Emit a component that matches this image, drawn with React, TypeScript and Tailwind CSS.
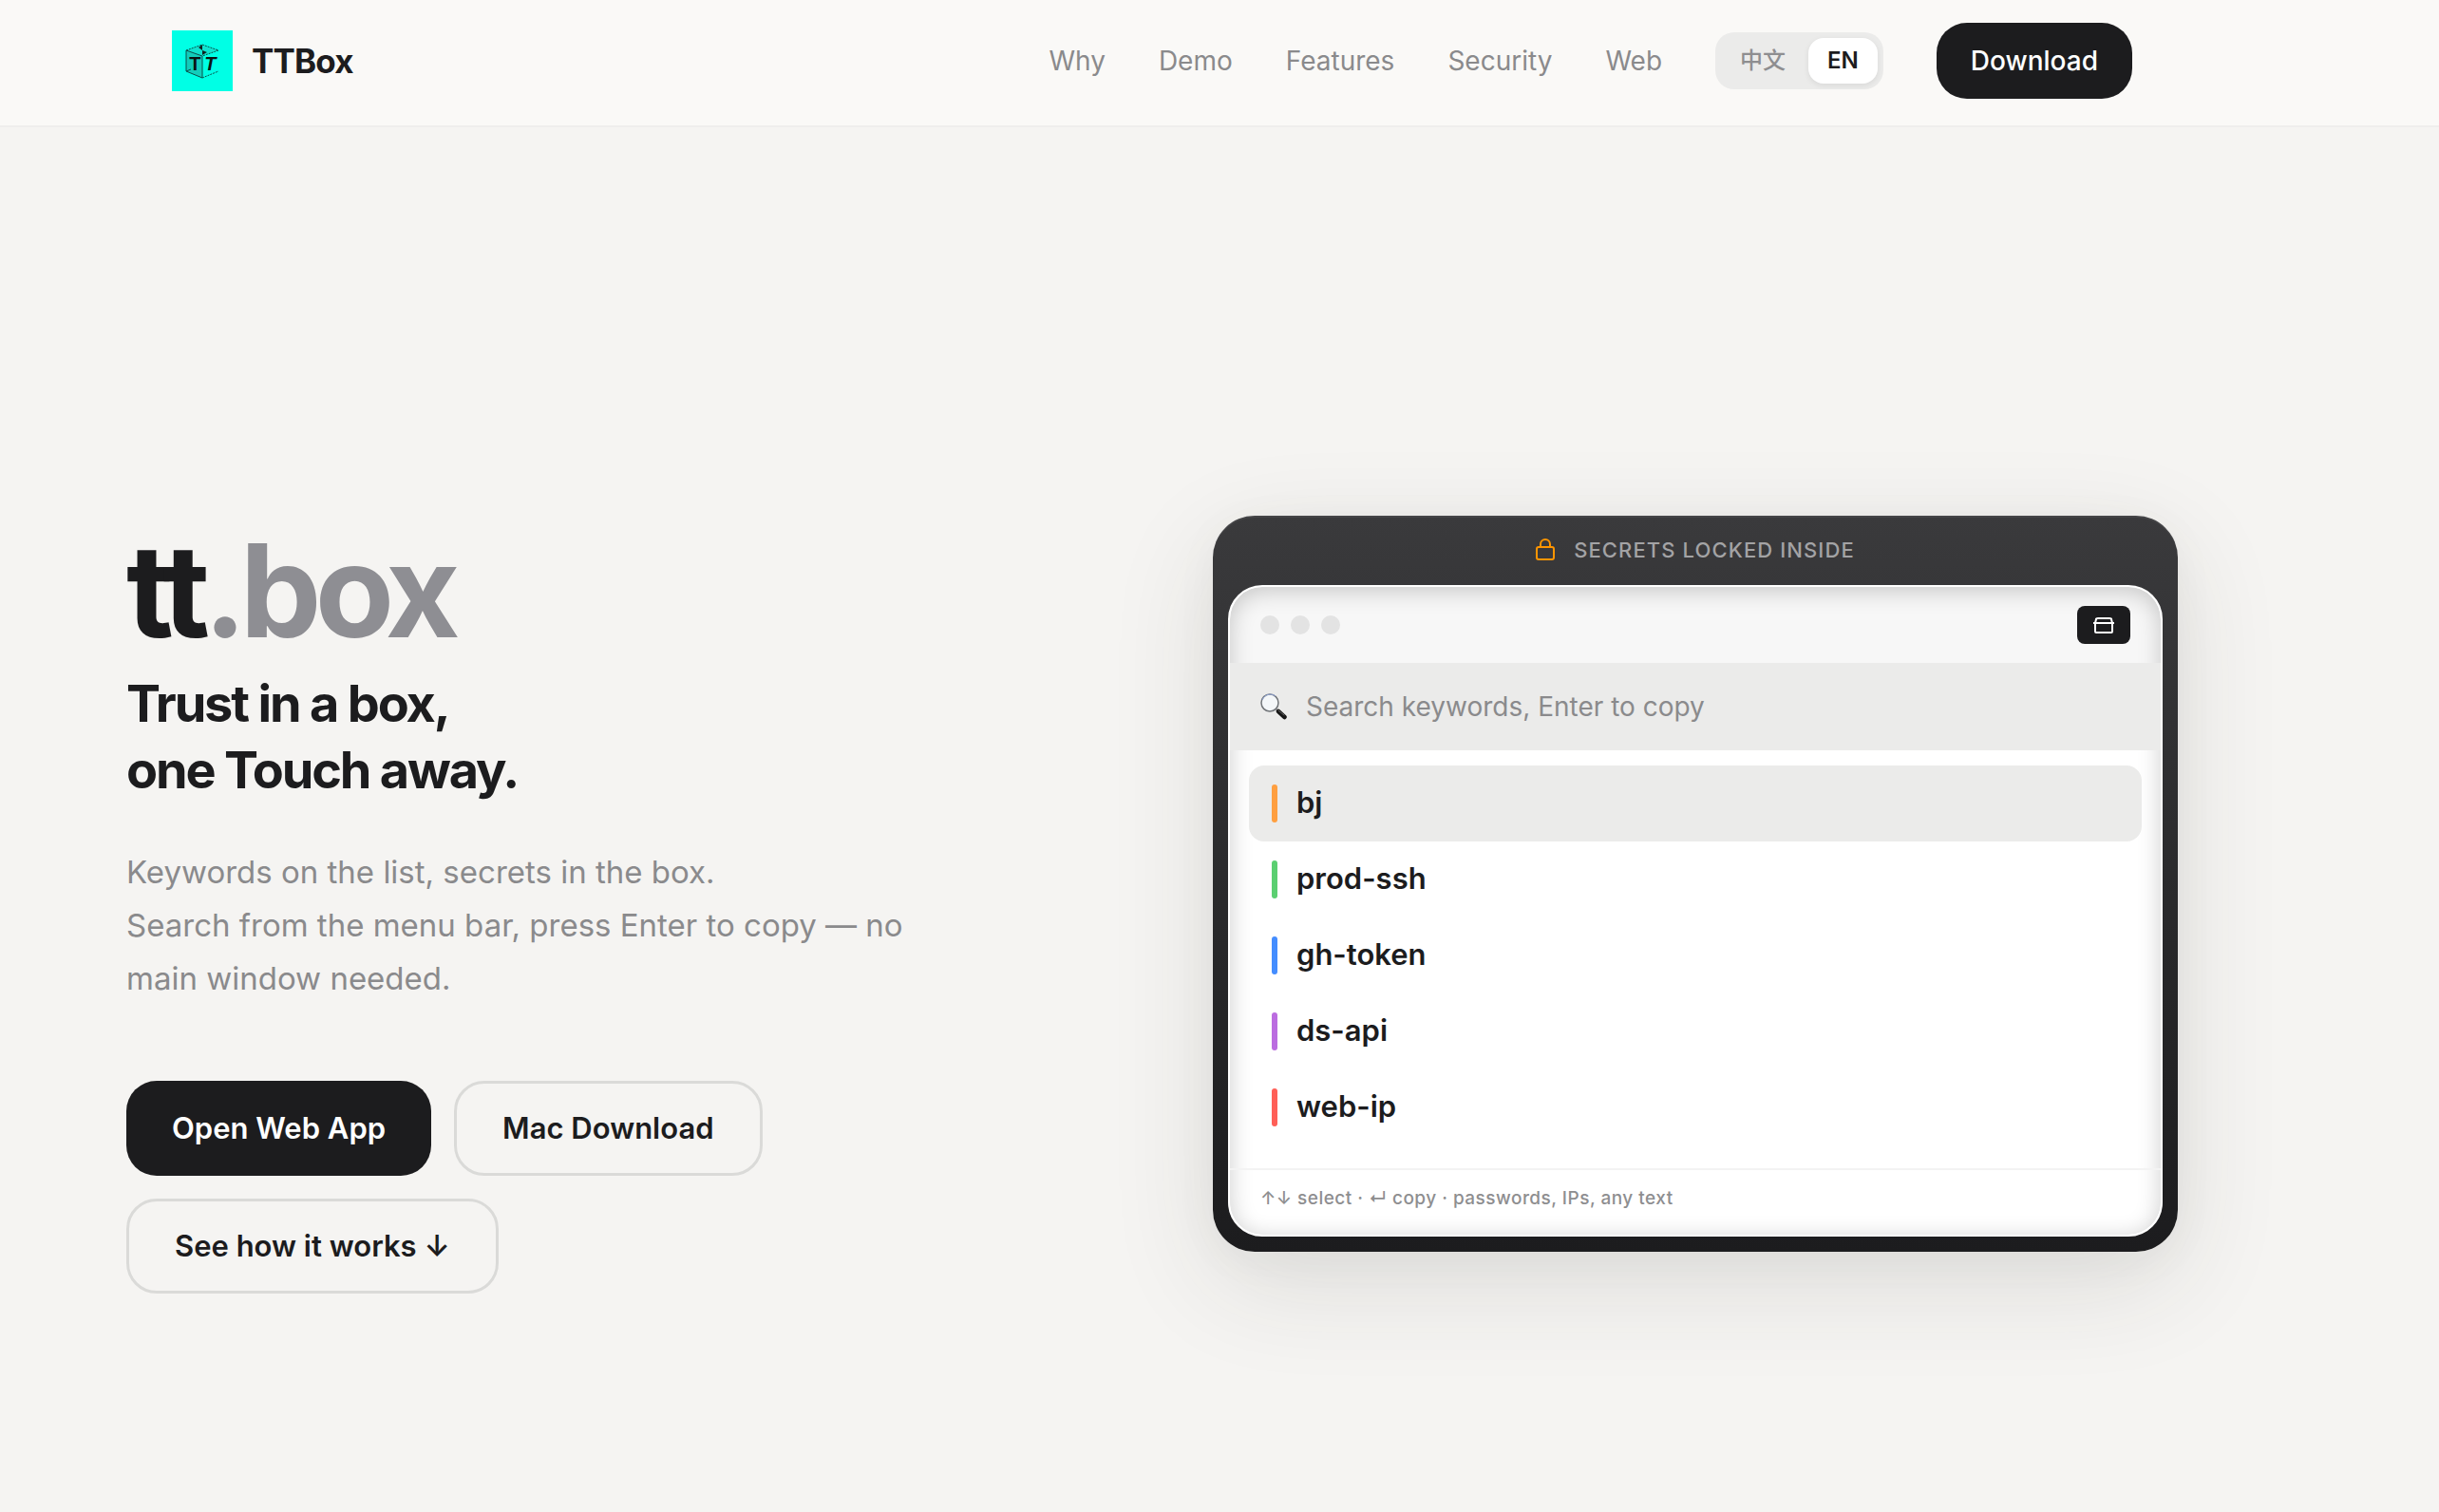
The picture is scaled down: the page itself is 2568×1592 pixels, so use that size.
const navLinks = [
  { label: "Why", href: "#why" },
  { label: "Demo", href: "#demo" },
  { label: "Features", href: "#features" },
  { label: "Security", href: "#security" },
  { label: "Web", href: "#web" },
];

const entries = [
  { name: "bj", bar: "bg-[#ff9f40]", active: true },
  { name: "prod-ssh", bar: "bg-[#5bcf71]", active: false },
  { name: "gh-token", bar: "bg-[#448dff]", active: false },
  { name: "ds-api", bar: "bg-[#bb6ce0]", active: false },
  { name: "web-ip", bar: "bg-[#ff5f57]", active: false },
];

function Logo() {
  return (
    <svg viewBox="0 0 64 64" className="size-16" aria-hidden="true">
      <rect width="64" height="64" fill="#00ffe5" />
      <path d="M15 21l17 6v23l-17-7z" fill="#12cdbb" />
      <path d="M15 21l17-6 17 6-17 6z" fill="#0fe3cf" />
      <path d="M28 18l4-3v6zM32 21l5 2-5 3z" fill="#10201f" />
      <g fill="none" stroke="#0b4f4a" strokeWidth="1">
        <path d="M15 21v22l17 7V27z" />
        <path d="M15 43l5-2" />
        <path d="M15 21l17-6 17 6-17 6M32 50l17-7" strokeDasharray="2 1" />
      </g>
      <g fill="#0a1413" className="font-['Liberation_Sans',sans-serif] font-bold" fontSize="20" textAnchor="middle">
        <text x="24" y="42">T</text>
        <text x="40" y="42" className="italic">T</text>
      </g>
    </svg>
  );
}

function LockIcon() {
  return (
    <svg viewBox="0 0 20 24" className="h-6 w-5" fill="none" stroke="#ff9500" strokeWidth="2" aria-hidden="true">
      <rect x="1" y="9" width="18" height="13" rx="2" />
      <path d="M5 9V6a5 5 0 0 1 10 0v3" />
    </svg>
  );
}

function BoxIcon() {
  return (
    <svg viewBox="0 0 22 18" className="h-[18px] w-[22px]" fill="none" stroke="#fff" strokeWidth="2" strokeLinejoin="round" aria-hidden="true">
      <path d="M2 7v9a1 1 0 0 0 1 1h16a1 1 0 0 0 1-1V7" />
      <path d="M0 7h22M2 7l1-4q0-1 2-1h12q2 0 2 1l1 4" />
    </svg>
  );
}

function SearchIcon() {
  return (
    <svg viewBox="0 0 28 28" className="size-7 shrink-0" aria-hidden="true">
      <path d="M17 17l2 2" stroke="#777" strokeWidth="2" />
      <path d="M19 19l6.500 6" stroke="#161616" strokeWidth="4.500" strokeLinecap="round" />
      <path d="M19 18l6 5" stroke="#666" strokeWidth="1" strokeLinecap="round" />
      <circle cx="10" cy="10" r="9" fill="#f4f7f9" stroke="#707478" strokeWidth="1.500" />
      <path d="M2 7a9 9 0 0 1 14-4" fill="none" stroke="#8fa3d4" strokeWidth="1" />
    </svg>
  );
}

function Header() {
  return (
    <header className="border-b-2 border-[#efeeed] bg-[#faf9f7] pr-[142px]">
      <div className="mx-auto flex max-w-[2160px] items-center justify-between px-12 pt-6 pb-7">
        <a href="#top" className="flex items-center gap-5 text-[35px] leading-10 font-bold tracking-tight">
          <Logo />
          TTBox
        </a>
        <div className="flex items-center gap-14">
          <nav className="flex items-center gap-14 text-[28px] leading-10 text-[#8a8a8c]">
            {navLinks.map((link) => (
              <a key={link.label} href={link.href}>
                {link.label}
              </a>
            ))}
          </nav>
          <div className="flex h-15 items-center gap-1 rounded-[20px] bg-[#ebebea] p-1.5 text-[24px]">
            <button className="h-12 rounded-2xl px-5 font-medium text-[#8e8e90]">中文</button>
            <button className="h-12 rounded-2xl bg-white px-5 font-semibold shadow-[0_2px_6px_rgba(0,0,0,0.08)]">
              EN
            </button>
          </div>
          <a
            href="#download"
            className="flex h-20 items-center rounded-[32px] bg-[#1c1c1e] px-9 text-[28px] font-medium text-white"
          >
            Download
          </a>
        </div>
      </div>
    </header>
  );
}

function Intro() {
  return (
    <div className="pt-14">
      <h1 className="text-[136px] leading-[136px] font-bold tracking-tighter">
        tt<span className="text-[#8e8e93]">.box</span>
      </h1>
      <p className="mt-4 text-[54px] leading-[70px] font-bold tracking-[-0.04em]">
        Trust in a box,
        <br />
        one Touch away.
      </p>
      <p className="mt-11 max-w-[840px] text-[33px] leading-14 text-[#8a8a8c]">
        Keywords on the list, secrets in the box.
        <br />
        Search from the menu bar, press Enter to copy — no main window needed.
      </p>
      <div className="mt-20 flex flex-wrap gap-6 text-[31px] font-semibold">
        <a href="#web" className="flex h-25 items-center rounded-[32px] bg-[#1c1c1e] px-12 text-white">
          Open Web App
        </a>
        <a href="#download" className="flex h-25 items-center rounded-[32px] border-3 border-[#dadad8] px-12">
          Mac Download
        </a>
        <a href="#demo" className="flex h-25 items-center rounded-[32px] border-3 border-[#dadad8] px-12">
          See how it works ↓
        </a>
      </div>
    </div>
  );
}

function VaultPreview() {
  return (
    <div className="rounded-[44px] bg-linear-to-b from-[#3a3a3c] to-[#1c1c1e] px-4 pb-4 shadow-[0_32px_112px_rgba(50,50,40,0.12),0_8px_48px_rgba(50,50,40,0.04),inset_0_2px_0_rgba(255,255,255,0.06)]">
      <div className="flex h-[73px] items-center justify-center gap-5 text-[22px] font-medium tracking-wider text-[#a3a3a5]">
        <LockIcon />
        SECRETS LOCKED INSIDE
      </div>
      <div className="overflow-hidden rounded-[36px] border-2 border-white bg-white shadow-[inset_0_4px_24px_rgba(0,0,0,0.2)]">
        <div className="flex h-20 items-center justify-between bg-black/3 px-8">
          <div className="flex gap-3">
            <span className="size-5 rounded-full bg-[#e3e3e3]" />
            <span className="size-5 rounded-full bg-[#e3e3e3]" />
            <span className="size-5 rounded-full bg-[#e3e3e3]" />
          </div>
          <button aria-label="Open box" className="flex h-10 w-14 items-center justify-center rounded-lg bg-[#1c1c1e]">
            <BoxIcon />
          </button>
        </div>
        <label className="flex h-23 items-center gap-5 bg-[#ebebea] px-8">
          <SearchIcon />
          <input
            type="text"
            aria-label="Search keywords"
            placeholder="Search keywords, Enter to copy"
            className="w-full bg-transparent text-[28px] outline-none placeholder:text-[#8a8a8c]"
          />
        </label>
        <ul className="px-5 pt-4 pb-6">
          {entries.map((entry) => (
            <li key={entry.name}>
              <button
                className={`flex h-20 w-full items-center gap-5 rounded-2xl px-6 text-left text-[31px] font-semibold ${
                  entry.active ? "bg-[#ebebea]" : ""
                }`}
              >
                <span className={`h-10 w-1.5 rounded-full ${entry.bar}`} />
                {entry.name}
              </button>
            </li>
          ))}
        </ul>
        <p className="border-t-2 border-[#f3f3f3] px-8 pt-3.5 pb-5.5 text-[19px] leading-8 font-medium tracking-wide text-[#8e8e90]">
          ↑↓ select · ↵ copy · passwords, IPs, any text
        </p>
      </div>
    </div>
  );
}

export default function App() {
  return (
    <div
      id="top"
      className="min-h-screen bg-[#f5f4f2] font-[Inter,'Noto_Sans_CJK_SC',sans-serif] text-[#1c1c1e] antialiased"
    >
      <Header />
      <main className="pr-[142px]">
        <section className="mx-auto grid max-w-[2160px] grid-cols-2 items-center gap-32 pt-[364px] pb-20">
          <Intro />
          <VaultPreview />
        </section>
      </main>
    </div>
  );
}
